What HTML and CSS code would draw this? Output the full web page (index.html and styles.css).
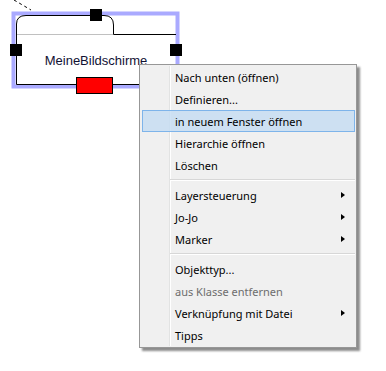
FILE: index.html
```html
<!DOCTYPE html>
<html lang="de">
<head>
    <meta charset="UTF-8">
    <meta name="viewport" content="width=device-width, initial-scale=1.0">
    <title>Bildschirm Kontextmenü</title>
    <link rel="stylesheet" href="styles.css">
</head>
<body>

    <div class="canvas">
        <svg class="diagram" width="190" height="100" viewBox="0 0 190 100">
            <!-- dashed connector -->
            <path d="M14 0 L31 10" stroke="#000" stroke-width="1" stroke-dasharray="3 3" fill="none"/>
            <!-- selection frame -->
            <rect x="13.5" y="13.5" width="164" height="73" fill="none" stroke="#aaaaff" stroke-width="4"/>
            <!-- screen shape -->
            <path d="M16.5 84.5 V24 Q16.5 15.5 26 15.5 H104 Q113.5 15.5 113.5 25 V34.5 H176" stroke="#000" stroke-width="1" fill="none"/>
            <path d="M16.5 84.5 H176" stroke="#000" stroke-width="1" fill="none"/>
            <line x1="17" y1="34.5" x2="113" y2="34.5" stroke="#c0c0c0" stroke-width="1"/>
            <!-- handles -->
            <rect x="90" y="9" width="12" height="12" fill="#000"/>
            <rect x="10" y="44" width="12" height="12" fill="#000"/>
            <rect x="170" y="44" width="12" height="12" fill="#000"/>
            <rect x="76.5" y="77.5" width="36" height="16" fill="#ff0000" stroke="#000" stroke-width="1"/>
            <text x="96" y="65" text-anchor="middle" class="shape-label">MeineBildschirme</text>
        </svg>

        <div class="context-menu">
            <ul class="menu-list">
                <li class="menu-item">Nach unten (öffnen)</li>
                <li class="menu-item">Definieren...</li>
                <li class="menu-item active">in neuem Fenster öffnen</li>
                <li class="menu-item">Hierarchie öffnen</li>
                <li class="menu-item">Löschen</li>
                <li class="separator"></li>
                <li class="menu-item sub">Layersteuerung</li>
                <li class="menu-item sub">Jo-Jo</li>
                <li class="menu-item sub">Marker</li>
                <li class="separator"></li>
                <li class="menu-item">Objekttyp...</li>
                <li class="menu-item disabled">aus Klasse entfernen</li>
                <li class="menu-item sub">Verknüpfung mit Datei</li>
                <li class="menu-item">Tipps</li>
            </ul>
        </div>
    </div>

</body>
</html>
```

FILE: styles.css
```css
*{
    box-sizing: border-box;
}

body{
    margin: 0;
    background: #fff;
    font-family: "Noto Sans", "Open Sans", sans-serif;
}

.canvas{
    position: relative;
    width: 386px;
    height: 371px;
}

.diagram{
    display: block;
}

.shape-label{
    font-family: "Liberation Sans", Arial, sans-serif;
    font-size: 13px;
    fill: #111133;
}

.context-menu{
    position: absolute;
    left: 139px;
    top: 64px;
    width: 218px;
    background-color: #f0f0f0;
    border: 1px solid #979797;
    padding: 1px 1px 1px 2px;
    box-shadow: 3px 3px 2px rgba(0, 0, 0, 0.45);
}

.menu-list{
    list-style-type: none;
    margin: 0;
    padding: 0;
    background-image: linear-gradient(to right, transparent 27px, #e2e3e3 27px, #e2e3e3 28px, #fff 28px, #fff 29px, transparent 29px);
}

.menu-item{
    position: relative;
    height: 22px;
    padding-left: 32px;
    padding-top: 1px;
    font-size: 11px;
    line-height: 19px;
    color: #000;
    border: 1px solid transparent;
}

.menu-item.active{
    background-color: rgba(196, 220, 243, 0.8);
    border-color: #7eb4ea;
}

.menu-item.disabled{
    color: #6d6d6d;
}

.menu-item.sub::after{
    content: "";
    position: absolute;
    right: 9px;
    top: 7px;
    border-top: 3.5px solid transparent;
    border-bottom: 3.5px solid transparent;
    border-left: 4px solid #000;
}

.separator{
    height: 8px;
    margin-left: 28px;
    background-image: linear-gradient(to bottom, transparent 3px, #d7d7d7 3px, #d7d7d7 4px, #fff 4px, #fff 5px, transparent 5px);
}
```
